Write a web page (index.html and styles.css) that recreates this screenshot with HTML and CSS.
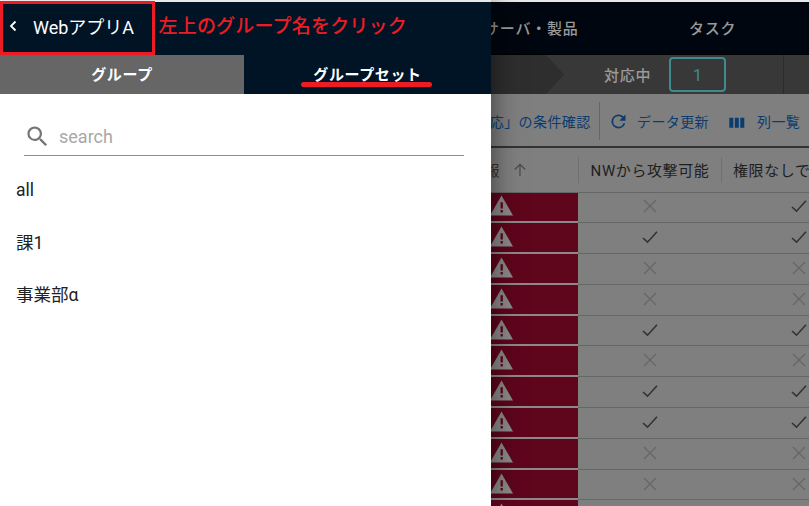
FILE: index.html
```html
<!DOCTYPE html>
<html lang="ja">
<head>
<meta charset="utf-8">
<title>グループセット</title>
<link rel="stylesheet" href="styles.css">
</head>
<body>
<div class="app">
  <header class="nav">
    <div class="nav-item nav-servers">サーバ・製品</div>
    <div class="nav-item nav-tasks">タスク</div>
  </header>
  <div class="status">
    <svg class="chevron" width="20" height="39" viewBox="0 0 20 39"><path d="M0 0 L18 19.500 L0 39 Z" fill="#2e2e2e"/></svg>
    <span class="status-label">対応中</span>
    <span class="status-count">1</span>
    <span class="status-rule"></span>
  </div>
  <div class="toolbar">
    <span class="tool-text tool-cond">「対応」の条件確認</span>
    <span class="tool-sep"></span>
    <svg class="tool-icon" width="21" height="21" viewBox="0 0 24 24"><path fill="#0c3c6e" d="M17.650 6.350A8 8 0 1 0 19.730 14h-2.080A6 6 0 1 1 12 6c1.660 0 3.140.69 4.220 1.780L13 11h7V4z"/></svg>
    <span class="tool-text tool-refresh">データ更新</span>
    <svg class="tool-icon tool-cols" width="18" height="18" viewBox="0 0 18 18"><path fill="#0c3c6e" d="M.3 5.700h4v10h-4zM5.800 5.700h4v10h-4zM11.300 5.700h4v10h-4z"/></svg>
    <span class="tool-text tool-list">列一覧</span>
  </div>
  <div class="thead">
    <div class="th th-info">情報<svg class="sort" width="16" height="16" viewBox="0 0 16 16"><path d="M8 14V2.500M2.800 7.500 8 2.300l5.200 5.200" fill="none" stroke="#4a4a4a" stroke-width="1.200"/></svg></div>
    <div class="th th-nw">NWから攻撃可能</div>
    <div class="th th-auth">権限なしで攻撃可能</div>
  </div>
  <div class="tbody" id="rows"></div>
</div>

<aside class="drawer">
  <div class="drawer-head">
    <svg class="back" width="10" height="14" viewBox="0 0 10 14"><path d="M7.500 2.500 3 7l4.500 4.500" fill="none" stroke="#fff" stroke-width="1.800"/></svg>
    <span class="drawer-title">WebアプリA</span>
  </div>
  <div class="tabs">
    <div class="tab tab-off">グループ</div>
    <div class="tab tab-on">グループセット</div>
  </div>
  <div class="search">
    <svg class="search-icon" width="27" height="27" viewBox="0 0 24 24"><path fill="#757575" d="M15.500 14h-.790l-.280-.270A6.470 6.470 0 0 0 16 9.500 6.500 6.500 0 1 0 9.500 16c1.610 0 3.090-.590 4.230-1.570l.270.280v.790l5 4.990L20.490 19zm-6 0C7.010 14 5 11.990 5 9.500S7.010 5 9.500 5 14 7.010 14 9.500 11.990 14 9.500 14z"/></svg>
    <span class="search-text">search</span>
  </div>
  <ul class="list">
    <li>all</li>
    <li>課1</li>
    <li>事業部α</li>
  </ul>
</aside>

<div class="note-box"></div>
<div class="note-text">左上のグループ名をクリック</div>
<div class="note-line"></div>

<script src="rows.js"></script>
</body>
</html>
```

FILE: rows.js
```js
var data = [[0,1],[1,1],[0,0],[0,0],[1,1],[0,0],[1,1],[1,1],[0,0],[0,0],[0,0]];
var warn = '<svg width="23" height="21" viewBox="0 0 24 21"><path fill="#8a8a8a" d="M0 21 12 0l12 21z"/><path fill="#5f051c" d="M11 7h2.400v6.500H11zM11 15.300h2.400v2.500H11z"/></svg>';
var check = '<svg width="18" height="18" viewBox="0 0 18 18"><path d="M2 10l4.500 4.200L16 3.700" fill="none" stroke="#333" stroke-width="1.600"/></svg>';
var cross = '<svg width="18" height="18" viewBox="0 0 18 18"><path d="M3 3l12 12M15 3 3 15" fill="none" stroke="#666" stroke-width="1.300"/></svg>';
document.getElementById('rows').innerHTML = data.map(function (r) {
  return '<div class="row"><div class="cell-warn">' + warn + '</div><div class="cell-nw">' +
    (r[0] ? check : cross) + '</div><div class="cell-auth">' + (r[1] ? check : cross) + '</div></div>';
}).join('');
```

FILE: styles.css
```css
* { box-sizing: border-box; }
html, body { margin: 0; padding: 0; }
body {
  width: 809px;
  height: 506px;
  overflow: hidden;
  position: relative;
  background: #7f7f7f;
  font-family: Roboto, "Noto Sans CJK JP", sans-serif;
}
.app { width: 809px; height: 506px; display: flex; flex-direction: column; overflow: hidden; }
.nav {
  height: 55px;
  flex: none;
  background: #00060f;
  border-top: 2px solid #e8e8e8;
  border-bottom: 1px solid #000;
  display: flex;
  align-items: center;
  color: #9a9a9a;
  font-size: 15px;
  font-weight: 500;
  padding-left: 484px;
  padding-bottom: 1px;
}
.nav-item { white-space: nowrap; letter-spacing: .8px; flex: none; }
.nav-servers { width: 205px; }
.status {
  height: 39px;
  flex: none;
  background: linear-gradient(to right, #2e2e2e 546px, #383838 546px);
  display: flex;
  align-items: center;
  color: #9a9a9a;
  font-size: 15px;
  font-weight: 500;
  padding-left: 546px;
}
.chevron { flex: none; margin-right: 38px; }
.status-label { letter-spacing: .7px; width: 65px; flex: none; }
.status-count {
  width: 57px;
  height: 35px;
  flex: none;
  border: 2px solid #3e8a8c;
  border-radius: 4px;
  color: #3e8a8c;
  font-size: 17px;
  font-weight: 400;
  display: flex;
  align-items: center;
  justify-content: center;
}
.status-rule { width: 1px; height: 39px; background: #2c2c2c; margin-left: 57px; flex: none; }
.toolbar {
  height: 54px;
  flex: none;
  background: #7f7f7f;
  border-bottom: 2px solid #333;
  display: flex;
  align-items: center;
  padding-left: 461px;
  padding-top: 2px;
}
.tool-text { color: #0c3c6e; font-size: 14px; letter-spacing: .4px; white-space: nowrap; flex: none; }
.tool-cond { width: 138px; }
.tool-sep { width: 1px; height: 38px; background: #666; margin-right: 8px; flex: none; }
.tool-icon { flex: none; }
.tool-refresh { margin-left: 8px; margin-right: 20px; }
.tool-cols { margin-right: 10px; }
.thead {
  height: 44.500px;
  flex: none;
  display: flex;
  align-items: center;
  border-bottom: 1px solid #666;
  color: #1e1e1e;
  font-size: 15px;
  letter-spacing: .6px;
  background: #7f7f7f;
}
.th { height: 26px; flex: none; display: flex; align-items: center; white-space: nowrap; }
.th-info { width: 579px; justify-content: flex-end; padding-right: 56px; color: #333; gap: 6px; border-right: 1px solid #707070; }
.sort { position: relative; left: 6px; }
.th-nw { width: 143px; justify-content: center; border-right: 1px solid #707070; }
.th-auth { padding-left: 11px; }
.row { display: flex; height: 30.800px; flex: none; }
.cell-warn {
  width: 578px;
  flex: none;
  background: #5f051c;
  padding: 0 0 2px 490px;
  display: flex;
  align-items: center;
  border-bottom: 2px solid #8a8a8a;
}
.cell-nw, .cell-auth {
  flex: none;
  display: flex;
  align-items: center;
  justify-content: center;
  border-bottom: 1px solid #666;
  padding-bottom: 2px;
}
.cell-nw { width: 143px; }
.cell-auth { width: 88px; justify-content: flex-start; padding-left: 69px; }
.drawer {
  position: absolute;
  left: 0;
  top: 0;
  width: 491px;
  height: 506px;
  background: #fff;
  box-shadow: 0 0 28px rgba(0, 0, 0, .55);
}
.drawer-head {
  height: 55px;
  background: #001426;
  border-top: 2px solid #e8e8e8;
  display: flex;
  align-items: center;
  color: #fff;
  padding-bottom: 5px;
}
.back { margin-left: 8px; flex: none; }
.drawer-title { margin-left: 15px; font-size: 18px; }
.tabs { display: flex; height: 39px; }
.tab {
  display: flex;
  align-items: center;
  justify-content: center;
  color: #fff;
  font-size: 15px;
  font-weight: 700;
  letter-spacing: .6px;
  padding-bottom: 3px;
}
.tab-off { background: #666; width: 244px; }
.tab-on { background: #001426; width: 247px; }
.search {
  margin: 24px 27px 0 24px;
  height: 38px;
  border-bottom: 1px solid #8c8c8c;
  display: flex;
  align-items: center;
}
.search-text { font-size: 18px; color: #a8a8a8; margin-left: 8px; }
.list { list-style: none; margin: 8.500px 0 0; padding: 0 0 0 16px; color: #222; font-size: 17.500px; }
.list li { height: 51.500px; display: flex; align-items: center; }
.note-box {
  position: absolute;
  left: 0;
  top: 1px;
  width: 155px;
  height: 54px;
  border: 3px solid #ed1c24;
}
.note-text {
  position: absolute;
  left: 158.500px;
  top: 12px;
  color: #ed1c24;
  font-size: 19px;
  font-weight: 500;
  letter-spacing: .2px;
  line-height: 29px;
  white-space: nowrap;
}
.note-line {
  position: absolute;
  left: 301px;
  top: 82px;
  width: 131px;
  height: 5px;
  border-radius: 3px;
  background: #ed1c24;
}
```
